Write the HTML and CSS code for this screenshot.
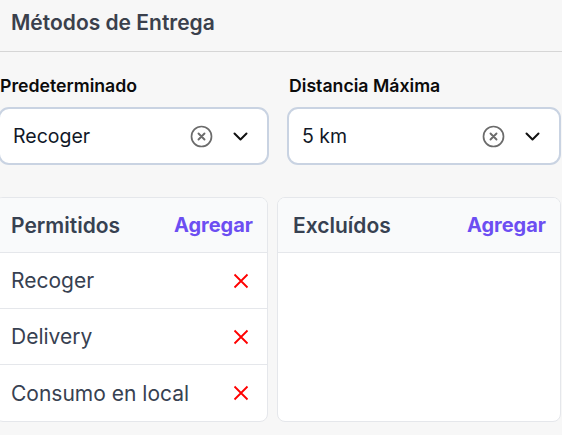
FILE: index.html
```html
<!DOCTYPE html>
<html lang="es">
<head>
<meta charset="utf-8">
<link rel="stylesheet" href="styles.css">
</head>
<body>
<div class="header"><h1 class="title">Métodos de Entrega</h1></div>
<div class="fields">
  <div class="field">
    <div class="label">Predeterminado</div>
    <div class="select">
      <span class="value">Recoger</span>
      <svg class="clear" width="23" height="23" viewBox="0 0 23 23"><circle cx="11.5" cy="11.5" r="10" fill="none" stroke="#6b6b6b" stroke-width="1.7"/><path d="M8.5 8.5l6 6M14.5 8.5l-6 6" stroke="#6b6b6b" stroke-width="1.9" stroke-linecap="round"/></svg>
      <svg class="chev" width="15" height="9" viewBox="0 0 15 9"><path d="M1.5 1.5l6 6 6-6" fill="none" stroke="#111" stroke-width="2" stroke-linecap="round" stroke-linejoin="round"/></svg>
    </div>
  </div>
  <div class="field">
    <div class="label">Distancia Máxima</div>
    <div class="select">
      <span class="value">5 km</span>
      <svg class="clear" width="23" height="23" viewBox="0 0 23 23"><circle cx="11.5" cy="11.5" r="10" fill="none" stroke="#6b6b6b" stroke-width="1.7"/><path d="M8.5 8.5l6 6M14.5 8.5l-6 6" stroke="#6b6b6b" stroke-width="1.9" stroke-linecap="round"/></svg>
      <svg class="chev" width="15" height="9" viewBox="0 0 15 9"><path d="M1.5 1.5l6 6 6-6" fill="none" stroke="#111" stroke-width="2" stroke-linecap="round" stroke-linejoin="round"/></svg>
    </div>
  </div>
</div>
<div class="panels">
  <div class="panel">
    <div class="panel-head"><span class="panel-title">Permitidos</span><span class="add">Agregar</span></div>
    <div class="row"><span>Recoger</span><svg class="x" width="16" height="16" viewBox="0 0 16 16"><path d="M1.5 1.5l13 13M14.5 1.5l-13 13" stroke="#ff0000" stroke-width="1.8"/></svg></div>
    <div class="row"><span>Delivery</span><svg class="x" width="16" height="16" viewBox="0 0 16 16"><path d="M1.5 1.5l13 13M14.5 1.5l-13 13" stroke="#ff0000" stroke-width="1.8"/></svg></div>
    <div class="row"><span>Consumo en local</span><svg class="x" width="16" height="16" viewBox="0 0 16 16"><path d="M1.5 1.5l13 13M14.5 1.5l-13 13" stroke="#ff0000" stroke-width="1.8"/></svg></div>
  </div>
  <div class="panel">
    <div class="panel-head"><span class="panel-title">Excluídos</span><span class="add">Agregar</span></div>
  </div>
</div>
</body>
</html>
```
FILE: styles.css
```css
* { box-sizing: border-box; }
html, body { margin: 0; padding: 0; }
body {
  background: #f7f7f7;
  font-family: Inter, "Noto Sans", sans-serif;
  width: 562px;
  height: 435px;
  overflow: hidden;
}
.header {
  height: 52px;
  border-bottom: 1px solid #d6d6d6;
  padding: 0 11px;
  display: flex;
  align-items: center;
}
.title {
  margin: 0 0 7px;
  font-size: 21px;
  font-weight: 600;
  color: #3a404c;
}
.fields {
  display: grid;
  grid-template-columns: 271px 274px;
  column-gap: 18px;
  margin-left: -2px;
  padding-top: 23px;
}
.label {
  font-size: 17.7px;
  font-weight: 600;
  color: #0b0b0b;
  margin-left: 2px;
  height: 22px;
  line-height: 22px;
}
.select {
  margin-top: 10px;
  height: 58px;
  border: 2px solid #c9d3e2;
  border-radius: 11px;
  background: #fff;
  display: flex;
  align-items: center;
  padding: 0 19px 0 13px;
}
.value {
  flex: 1;
  font-size: 19.5px;
  color: #111827;
}
.clear { margin-right: 20px; }
.chev { margin-top: 1px; }
.panels {
  display: grid;
  grid-template-columns: 273px 284px;
  column-gap: 9px;
  margin-left: -5px;
  margin-top: 32px;
}
.panel {
  height: 225px;
  background: #fff;
  border: 1px solid #e5e7eb;
  border-radius: 8px;
  overflow: hidden;
}
.panel-head {
  height: 55px;
  background: #f9fafb;
  border-bottom: 1px solid #e5e7eb;
  display: flex;
  align-items: center;
  justify-content: space-between;
  padding: 0 14px 0 15px;
}
.panel-title {
  font-size: 21px;
  font-weight: 600;
  color: #374151;
}
.add {
  font-size: 20px;
  font-weight: 700;
  color: #6c4ef2;
}
.row {
  height: 56px;
  border-bottom: 1px solid #e5e7eb;
  display: flex;
  align-items: center;
  justify-content: space-between;
  padding: 0 18px 0 15px;
  font-size: 21px;
  color: #374151;
}
.row:last-child { border-bottom: none; }
```
